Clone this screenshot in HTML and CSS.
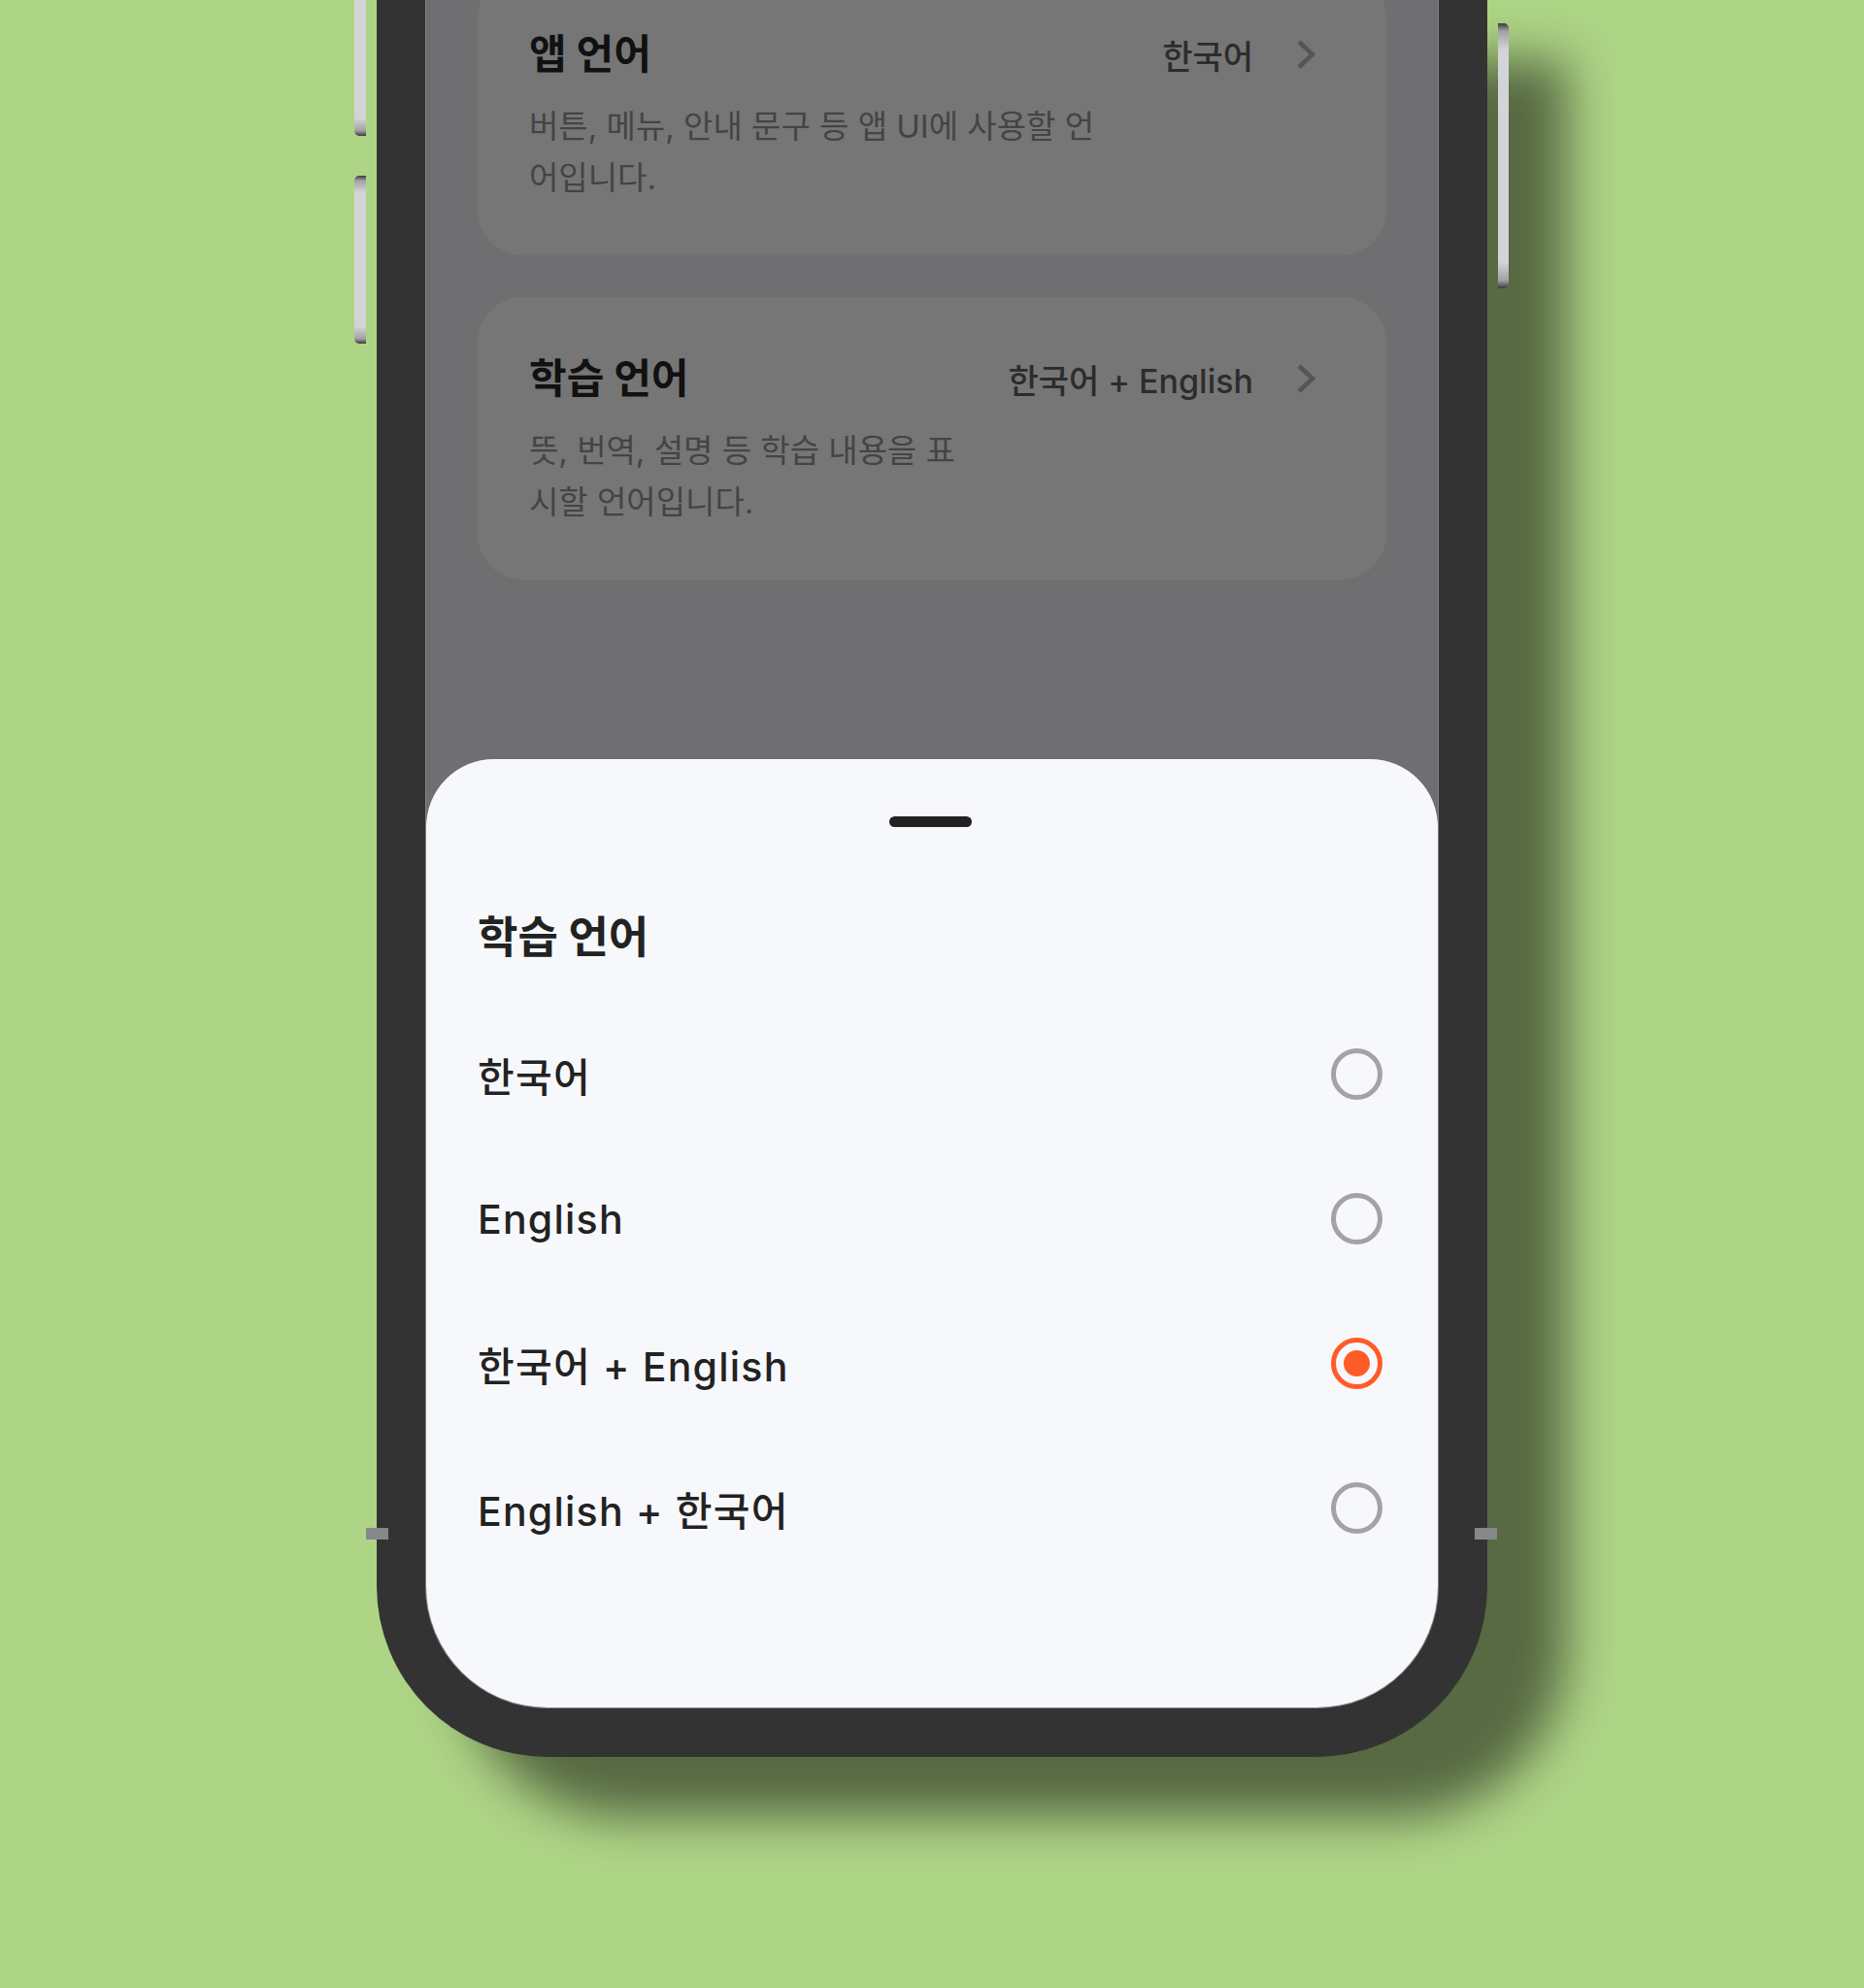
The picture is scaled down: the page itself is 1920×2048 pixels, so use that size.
FILE: index.html
```html
<!doctype html>
<html lang="ko">
<head>
    <meta charset="utf-8">
    <title>학습 언어</title>
    <link rel="stylesheet" href="styles.css">
</head>
<body>

<div class="phone">
    <span class="side-btn side-btn-left side-btn-one"></span>
    <span class="side-btn side-btn-left side-btn-two"></span>
    <span class="side-btn side-btn-right"></span>
    <span class="antenna antenna-left"></span>
    <span class="antenna antenna-right"></span>

    <div class="screen">
        <div class="settings">
            <div class="setting-card">
                <div class="setting-text">
                    <h2 class="setting-title">앱 언어</h2>
                    <p class="setting-desc">버튼, 메뉴, 안내 문구 등 앱 UI에 사용할 언어입니다.</p>
                </div>
                <div class="setting-value">
                    <span>한국어</span>
                    <svg class="chevron" width="20" height="30" viewBox="0 0 20 30">
                        <path d="M3 2 L17 15 L3 28"/>
                    </svg>
                </div>
            </div>

            <div class="setting-card">
                <div class="setting-text">
                    <h2 class="setting-title">학습 언어</h2>
                    <p class="setting-desc">뜻, 번역, 설명 등 학습 내용을 표시할 언어입니다.</p>
                </div>
                <div class="setting-value">
                    <span>한국어 + English</span>
                    <svg class="chevron" width="20" height="30" viewBox="0 0 20 30">
                        <path d="M3 2 L17 15 L3 28"/>
                    </svg>
                </div>
            </div>
        </div>

        <div class="sheet">
            <div class="sheet-handle"></div>
            <h2 class="sheet-title">학습 언어</h2>
            <ul class="options">
                <li class="option">
                    <span class="option-label">한국어</span>
                    <span class="radio"></span>
                </li>
                <li class="option">
                    <span class="option-label">English</span>
                    <span class="radio"></span>
                </li>
                <li class="option">
                    <span class="option-label">한국어 + English</span>
                    <span class="radio checked"></span>
                </li>
                <li class="option">
                    <span class="option-label">English + 한국어</span>
                    <span class="radio"></span>
                </li>
            </ul>
        </div>
    </div>
</div>

</body>
</html>
```

FILE: styles.css
```css
body {
    margin: 0;
    height: 2048px;
    overflow: hidden;
    background: #aed486;
    font-family: Inter, "Noto Sans CJK KR", sans-serif;
}

.phone {
    position: relative;
    width: 1144px;
    height: 1810px;
    margin: 0 auto;
    padding: 0 50px 50px;
    box-sizing: border-box;
    background: #333333;
    border-radius: 0 0 176px 176px;
    box-shadow: 82px 62px 50px rgba(0, 0, 0, 0.5);
}

/* hardware buttons */
.side-btn {
    position: absolute;
    width: 12px;
    background: linear-gradient(to bottom, #3a3a3c 0%, #a2a2a6 3%, #d3d4d8 10%, #d3d4d8 90%, #a2a2a6 97%, #3a3a3c 100%);
}

.side-btn-left {
    left: -23px;
    border-radius: 5px 0 0 5px;
}

.side-btn-one {
    top: -40px;
    height: 180px;
}

.side-btn-two {
    top: 181px;
    height: 173px;
}

.side-btn-right {
    right: -22px;
    top: 24px;
    height: 273px;
    width: 11px;
    border-radius: 0 5px 5px 0;
}

.antenna {
    position: absolute;
    top: 1574px;
    width: 23px;
    height: 12px;
    background: #86878a;
}

.antenna-left {
    left: -11px;
}

.antenna-right {
    right: -10px;
}

/* screen */
.screen {
    position: relative;
    height: 100%;
    box-sizing: border-box;
    border: 1px solid #858587;
    border-top: none;
    border-radius: 0 0 126px 126px;
    overflow: hidden;
    background: #6f6f71;
}

.settings {
    display: flex;
    flex-direction: column;
    gap: 43px;
    padding: 0 53px;
    margin-top: -28px;
}

.setting-card {
    display: flex;
    align-items: flex-start;
    gap: 48px;
    height: 291px;
    box-sizing: border-box;
    padding: 56px 73px 53px 53px;
    background: #767676;
    border-radius: 46px;
}

.setting-text {
    flex: 1;
}

.setting-title {
    margin: 0;
    font-size: 42px;
    line-height: 56px;
    font-weight: 700;
    color: #111111;
}

.setting-desc {
    margin: 20px 0 0;
    font-size: 33px;
    line-height: 53px;
    color: #444444;
}

.setting-value {
    display: flex;
    align-items: center;
    gap: 44px;
    height: 56px;
    font-size: 34px;
    font-weight: 500;
    color: #2c2c2c;
    white-space: nowrap;
}

.chevron path {
    fill: none;
    stroke: #555555;
    stroke-width: 4.5;
}

/* bottom sheet */
.sheet {
    position: absolute;
    left: 0;
    right: 0;
    bottom: 0;
    height: 977px;
    box-sizing: border-box;
    padding: 59px 57px 0 53px;
    background: #f7f8fc;
    border-radius: 70px 70px 0 0;
}

.sheet-handle {
    width: 85px;
    height: 11px;
    margin: 0 auto;
    border-radius: 6px;
    background: #222222;
}

.sheet-title {
    margin: 86px 0 0;
    font-size: 45px;
    line-height: 56px;
    font-weight: 700;
    color: #222222;
}

.options {
    list-style: none;
    margin: 38px 0 0;
    padding: 0;
}

.option {
    display: flex;
    align-items: center;
    justify-content: space-between;
    height: 149px;
}

.option-label {
    font-size: 41px;
    font-weight: 500;
    color: #222222;
    letter-spacing: 0.03em;
}

.radio {
    position: relative;
    width: 53px;
    height: 53px;
    box-sizing: border-box;
    border: 5px solid #a3a3a3;
    border-radius: 50%;
}

.radio.checked {
    border-color: #ff5b27;
}

.radio.checked::after {
    content: "";
    position: absolute;
    top: 8px;
    left: 8px;
    width: 27px;
    height: 27px;
    border-radius: 50%;
    background: #ff5b27;
}
```
